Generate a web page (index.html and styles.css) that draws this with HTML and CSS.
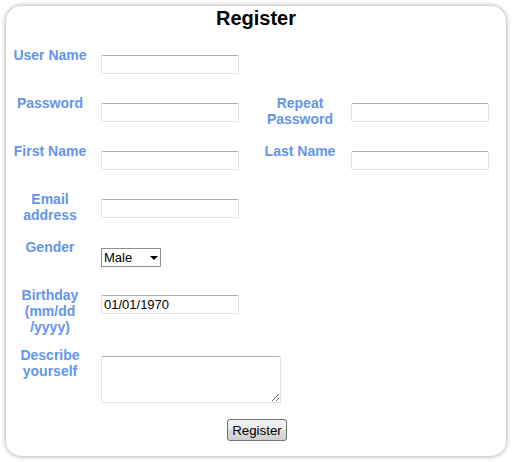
FILE: index.html
```html
<!DOCTYPE html>
<html>
<head>
<meta charset="utf-8">
<title>Register</title>
<link rel="stylesheet" href="styles.css">
</head>
<body>
<div class="card">
  <h1 class="title">Register</h1>
  <form class="form">
    <div class="row">
      <div class="label">User Name</div>
      <div class="field"><input class="text" type="text"></div>
    </div>
    <div class="row">
      <div class="label">Password</div>
      <div class="field"><input class="text" type="password"></div>
      <div class="label">Repeat<br>Password</div>
      <div class="field"><input class="text" type="password"></div>
    </div>
    <div class="row">
      <div class="label">First Name</div>
      <div class="field"><input class="text" type="text"></div>
      <div class="label">Last Name</div>
      <div class="field"><input class="text" type="text"></div>
    </div>
    <div class="row">
      <div class="label">Email<br>address</div>
      <div class="field"><input class="text" type="text"></div>
    </div>
    <div class="row">
      <div class="label">Gender</div>
      <div class="field field-select">
        <span class="select-wrap"><select class="select"><option>Male</option><option>Female</option></select></span>
      </div>
    </div>
    <div class="row">
      <div class="label">Birthday<br>(mm/dd<br>/yyyy)</div>
      <div class="field"><input class="text" type="text" value="01/01/1970"></div>
    </div>
    <div class="row">
      <div class="label">Describe<br>yourself</div>
      <div class="field field-area"><textarea class="area"></textarea></div>
    </div>
    <div class="actions">
      <button class="button" type="button">Register</button>
    </div>
  </form>
</div>
</body>
</html>
```
FILE: styles.css
```css
html, body {
  margin: 0;
  padding: 0;
  background: #ffffff;
}

body {
  font-family: "Liberation Sans", Arial, sans-serif;
}

.card {
  margin: 6px;
  width: 500px;
  height: 450px;
  box-sizing: border-box;
  padding: 1px 2px 0 2px;
  background: #ffffff;
  border-radius: 15px;
  box-shadow: 0 0 4px 1px rgba(0, 0, 0, 0.28);
}

.title {
  margin: 0;
  font-size: 20px;
  line-height: 23px;
  font-weight: bold;
  text-align: center;
  color: #000000;
}

.form {
  margin: 17px 0 0 0;
}

.row {
  display: grid;
  grid-template-columns: 84px 148px 84px 1fr;
  column-gap: 9px;
  min-height: 48px;
  align-items: start;
}

.label {
  font-size: 14px;
  line-height: 16px;
  font-weight: bold;
  color: #6495ed;
  text-align: center;
  padding-bottom: 12px;
}

.field {
  padding-top: 8px;
}

.field-select {
  padding-top: 9px;
}

.field-area {
  padding-top: 9px;
}

.text {
  display: block;
  width: 138px;
  height: 19px;
  box-sizing: border-box;
  margin: 0;
  padding: 0 2px;
  border: 1px solid #dfe2e8;
  border-top-color: #abadb3;
  border-radius: 2px;
  font-family: "Liberation Sans", Arial, sans-serif;
  font-size: 13px;
  color: #000000;
  background: #ffffff;
  outline: none;
}

.select-wrap {
  position: relative;
  display: inline-block;
}

.select-wrap::after {
  content: "";
  position: absolute;
  right: 3px;
  top: 8px;
  border-left: 4px solid transparent;
  border-right: 4px solid transparent;
  border-top: 4px solid #000000;
  pointer-events: none;
}

.select {
  display: block;
  -webkit-appearance: none;
  appearance: none;
  width: 60px;
  height: 19px;
  box-sizing: border-box;
  margin: 0;
  padding: 0 0 0 2px;
  border: 1px solid #8f8f8f;
  border-radius: 0;
  background: #ffffff;
  font-family: "Liberation Sans", Arial, sans-serif;
  font-size: 13px;
  line-height: 17px;
  color: #000000;
  outline: none;
}

.area {
  display: block;
  width: 180px;
  height: 47px;
  box-sizing: border-box;
  margin: 0;
  padding: 2px;
  border: 1px solid #dfe2e8;
  border-top-color: #abadb3;
  border-radius: 2px;
  resize: both;
  font-family: "Liberation Sans", Arial, sans-serif;
  font-size: 13px;
  outline: none;
}

.actions {
  margin-top: 16px;
  text-align: center;
  padding-left: 2px;
}

.button {
  width: 60px;
  height: 22px;
  box-sizing: border-box;
  margin: 0;
  padding: 0;
  border: 1px solid #707070;
  border-radius: 3px;
  background: linear-gradient(#f2f2f2 0%, #ebebeb 50%, #dddddd 50%, #cfcfcf 100%);
  font-family: "Liberation Sans", Arial, sans-serif;
  font-size: 13.33px;
  color: #000000;
}
```
